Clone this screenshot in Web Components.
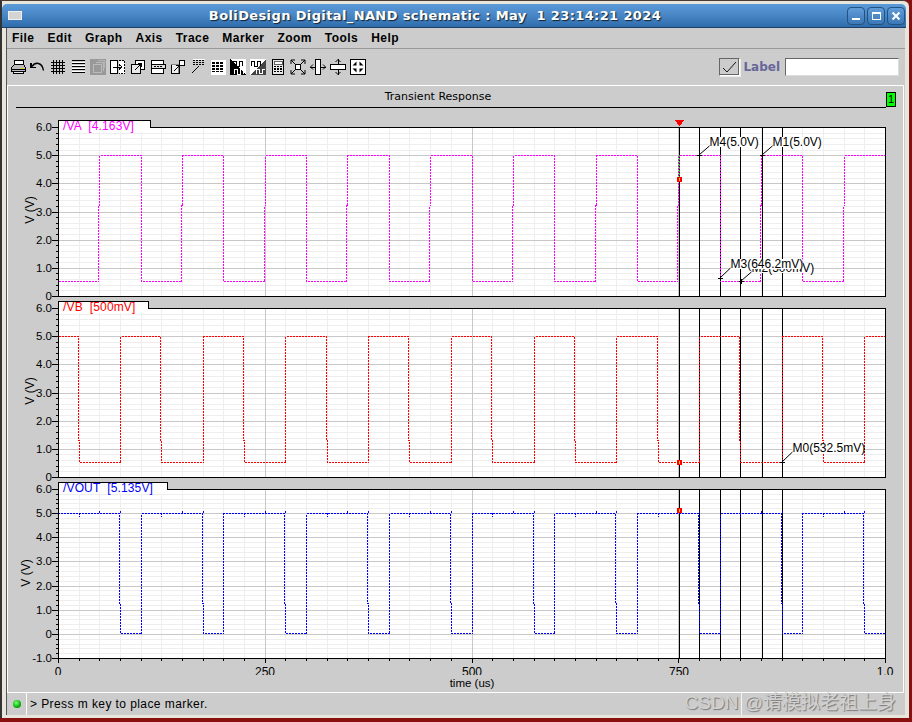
<!DOCTYPE html>
<html>
<head>
<meta charset="utf-8">
<title>BoliDesign Digital_NAND schematic</title>
<style>
  html, body { margin: 0; padding: 0; }
  body { width: 912px; height: 722px; overflow: hidden; background: #8a1010; position: relative; font-family: "Liberation Sans", sans-serif; }
</style>
</head>
<body>
<app-window>
  <title-bar slot="title">BoliDesign Digital_NAND schematic : May  1 23:14:21 2024</title-bar>
  <menu-bar items="File,Edit,Graph,Axis,Trace,Marker,Zoom,Tools,Help"></menu-bar>
  <tool-bar></tool-bar>
  <plot-panel heading="Transient Response">
    <wave-plot kind="va" name="/VA  [4.163V]" color="#ff00ff" tab="150"></wave-plot>
    <wave-plot kind="vb" name="/VB  [500mV]" color="#ff0000" tab="148"></wave-plot>
    <wave-plot kind="vout" name="/VOUT  [5.135V]" color="#0000ff" tab="167" ymin="-1" axis></wave-plot>
  </plot-panel>
  <status-bar>&gt; Press m key to place marker.</status-bar>
</app-window>
<water-mark>CSDN @请模拟老祖上身</water-mark>

<script>
// window shell: outer frame, title on top, everything else inside the inner frame
class AppWindow extends HTMLElement {
  constructor() {
    super();
    this.attachShadow({ mode: 'open' });
    this.shadowRoot.innerHTML = `
      <style>
        :host {
          display: flex;
          flex-direction: column;
          box-sizing: border-box;
          width: 909px;
          height: 718px;
          background: #e8e5dd;
          border-top: 1px solid #4a3a30;
          border-left: 2px solid #333;
          border-top-right-radius: 6px;
          padding-top: 3px;
        }
        .inner {
          flex: 1;
          min-height: 0;
          display: flex;
          flex-direction: column;
          margin: 0 4px 3px 4px;
          background: #cccccc;
          border-left: 1px solid #555;
        }
        ::slotted([slot="title"]) { margin-right: 3px; }
      </style>
      <slot name="title"></slot>
      <div class="inner"><slot></slot></div>
    `;
  }
}

class TitleBar extends HTMLElement {
  constructor() {
    super();
    this.attachShadow({ mode: 'open' });
    this.shadowRoot.innerHTML = `
      <style>
        :host {
          display: flex;
          align-items: center;
          box-sizing: border-box;
          height: 24px;
          padding: 0 1px 0 6px;
          background: linear-gradient(#5b9ad8, #4a88c8 45%, #2f6cab);
          border-bottom: 1px solid #1d3f66;
          border-radius: 5px 5px 0 0;
          color: #fff;
        }
        .menu {
          width: 12px;
          height: 7px;
          background: #d4d4d4;
          border: 1px solid #f0f0f0;
          margin-right: 6px;
        }
        .text {
          flex: 1;
          text-align: center;
          white-space: pre;
          font: bold 13px "DejaVu Sans", sans-serif;
          letter-spacing: 0.38px;
          text-shadow: 1px 1px 1px #123;
        }
        .btns { display: flex; gap: 2px; margin-left: 5px; }
        .btn {
          box-sizing: border-box;
          width: 18px;
          height: 18px;
          border: 1px solid #24527f;
          border-radius: 4px;
          background: linear-gradient(#5f9cd8, #3d78b6);
          display: flex;
          align-items: center;
          justify-content: center;
        }
        svg { display: block; }
      </style>
      <div class="menu"></div>
      <div class="text"><slot></slot></div>
      <div class="btns">
        <div class="btn"><svg width="12" height="12" shape-rendering="crispEdges"><rect x="2" y="8" width="8" height="2" fill="#fff"/></svg></div>
        <div class="btn"><svg width="12" height="12" shape-rendering="crispEdges"><path d="M2 2h8v7h-8z" fill="none" stroke="#fff"/><rect x="2" y="2" width="8" height="2" fill="#fff"/></svg></div>
        <div class="btn"><svg width="12" height="12"><path d="M2.5 2.5l7 7M9.5 2.5l-7 7" stroke="#fff" stroke-width="2"/></svg></div>
      </div>
    `;
  }
}

class MenuBar extends HTMLElement {
  constructor() {
    super();
    this.attachShadow({ mode: 'open' });
  }
  connectedCallback() {
    const items = this.getAttribute('items').split(',');
    this.shadowRoot.innerHTML = `
      <style>
        :host {
          display: flex;
          align-items: center;
          gap: 13px;
          box-sizing: border-box;
          height: 21px;
          padding: 0 0 1px 5px;
          border-bottom: 1px solid #999;
          font: bold 12px "Liberation Sans", sans-serif;
          letter-spacing: 0.45px;
          color: #000;
        }
      </style>
      ${items.map(i => `<span>${i}</span>`).join('')}
    `;
  }
}

// toolbar glyphs, all on a 16x16 box
const TOOL_ICONS = [
  // printer
  `<path d="M5 1h8l1 5H4z" fill="#fff" stroke="#000"/><path d="M1.5 8.5l3-3h9l2 3v4h-14z" fill="#bbb" stroke="#000"/><path d="M2 10h13" stroke="#000"/><rect x="11" y="9" width="3" height="1" fill="#e8d800"/><path d="M3.5 12.5h10v2h-10z" fill="#eee" stroke="#000"/>`,
  // undo
  `<path d="M2 7.5C5 3 12 2.5 13.5 11.5" fill="none" stroke="#000" stroke-width="1.4" shape-rendering="auto"/><path d="M1 3.5v5h5" fill="none" stroke="#000" stroke-width="1.4"/>`,
  // grid
  `<path d="M3.5 1v14M6.5 1v14M9.5 1v14M12.5 1v14M1 3.5h14M1 6.5h14M1 9.5h14M1 12.5h14" stroke="#000"/>`,
  // horizontal lines
  `<path d="M1.5 1.5h13M1.5 4.5h13M1.5 7.5h13M1.5 10.5h13M1.5 13.5h13" stroke="#000"/><path d="M1.5 3h13M1.5 6h13M1.5 9h13M1.5 12h13" stroke="#fff"/>`,
  // stacked pages, disabled
  `<rect x="0" y="0" width="16" height="16" fill="#999"/><path d="M3.5 5.5h8v8h-8zM5.5 3.5h8v8" fill="none" stroke="#bbb"/><path d="M7.5 1.5h7v7" fill="none" stroke="#b4b4b4"/>`,
  // split with dashed half
  `<rect x="0.5" y="1.5" width="7" height="13" fill="#fff" stroke="#000"/><path d="M8.5 1.5h6v13h-6" fill="#fff" stroke="#000" stroke-dasharray="2 1"/><path d="M3 8h8M9 5.5l3 2.5-3 2.5" fill="none" stroke="#000"/>`,
  // overlapped squares with arrow
  `<rect x="5.5" y="1.5" width="9" height="9" fill="#fff" stroke="#000"/><rect x="1.5" y="5.5" width="9" height="9" fill="#e8e8e8" stroke="#000"/><path d="M5 11l6-6M8 4.5h3.5V8" fill="none" stroke="#000"/>`,
  // window with dashed bar
  `<rect x="1.5" y="1.5" width="12" height="13" fill="#fff" stroke="#000"/><rect x="1" y="5" width="14" height="4" fill="#ddd" stroke="#000"/><path d="M4 7h9" stroke="#000" stroke-dasharray="2 1"/>`,
  // small box plus large box, arrow up right
  `<path d="M1.5 5.5h7v9h-7zM1.5 5.5" fill="#eee" stroke="#888"/><rect x="9.5" y="1.5" width="5" height="5" fill="#fff" stroke="#000"/><path d="M1.5 6v8.5h8V8" fill="none" stroke="#000"/><path d="M4 12l5-5M6 6.5h3.5V10" fill="none" stroke="#000"/>`,
  // dotted table with diagonal pointer
  `<path d="M3 1.5h12M3 3.5h12M3 5.5h12" stroke="#000" stroke-dasharray="2 1"/><rect x="3" y="0" width="12" height="1" fill="#fff"/><path d="M9 7L2 14" stroke="#000"/>`,
  // block table
  `<rect x="0.5" y="0.5" width="15" height="15" fill="#fff"/><path d="M3 3v10M7 3v10M11 3v10" stroke="#000" stroke-width="3" stroke-dasharray="2 1"/>`,
  // wave split, black
  `<path d="M0 0h16v16z" fill="#fff"/><path d="M0 0v16h16z" fill="#000"/><path d="M1 7h2V2h3v5h3V2h3v5" fill="none" stroke="#000"/><path d="M4 15v-5h3v5h3v-5h3v5" fill="none" stroke="#fff"/>`,
  // wave split, gray
  `<path d="M0 0h16L0 16z" fill="#fff"/><path d="M16 0v16H0z" fill="#444"/><path d="M1 7V2h3v5h3V2h3v5" fill="none" stroke="#000"/><path d="M6 15v-5h3v4h3v-4h3" fill="none" stroke="#fff"/>`,
  // calculator
  `<rect x="2.5" y="0.5" width="11" height="15" fill="#e8e8e8" stroke="#000"/><rect x="4" y="2" width="8" height="3" fill="#fff" stroke="#000" stroke-width="0.6"/><path d="M4 7.5h8M4 10h8M4 12.5h8" stroke="#000" stroke-width="1.4" stroke-dasharray="2 1"/>`,
  // zoom fit
  `<rect x="5.5" y="5.5" width="5" height="5" fill="#fff" stroke="#000" stroke-width="1.2"/><g shape-rendering="auto" fill="none" stroke="#000"><path d="M1 1l4.500 4.500M15 1l-4.500 4.500M1 15l4.500-4.500M15 15l-4.500-4.500"/><path d="M1 5V1h4M11 1h4v4M1 11v4h4M15 11v4h-4"/></g>`,
  // vertical bar, left and right arrows
  `<rect x="5.500" y="0.500" width="5" height="15" fill="#fff" stroke="#000"/><path d="M0 8h5M11 8h5" stroke="#000"/><path d="M3 5.500L0.500 8 3 10.500M13 5.500L15.500 8 13 10.500" fill="none" stroke="#000" shape-rendering="auto"/>`,
  // horizontal bar, up and down arrows
  `<rect x="0.500" y="5.500" width="15" height="5" fill="#fff" stroke="#000"/><path d="M8 0v5M8 11v5" stroke="#000"/><path d="M5.500 3L8 0.500 10.500 3M5.500 13L8 15.500 10.500 13" fill="none" stroke="#000" shape-rendering="auto"/>`,
  // framed inward arrows
  `<rect x="0.500" y="0.500" width="15" height="15" fill="#fff" stroke="#000"/><g fill="#000" shape-rendering="auto"><path d="M6.500 6.500v-4l-4 4zM9.500 6.500v-4l4 4zM6.500 9.500v4l-4-4zM9.500 9.500v4l4-4z"/></g>`
];

class ToolBar extends HTMLElement {
  constructor() {
    super();
    this.attachShadow({ mode: 'open' });
    this.shadowRoot.innerHTML = `
      <style>
        :host {
          display: flex;
          align-items: center;
          box-sizing: border-box;
          height: 36px;
          padding: 0 6px 1px 3px;
        }
        .tools { display: flex; gap: 4px; flex: 1; }
        svg { display: block; width: 16px; height: 16px; }
        .check {
          box-sizing: border-box;
          width: 21px;
          height: 18px;
          border: 1px solid #666;
          border-right-color: #fff;
          border-bottom-color: #fff;
          box-shadow: inset -1px -1px 0 #666, 1px 1px 0 #eee;
          background: #ccc;
          display: flex;
          align-items: center;
          justify-content: center;
        }
        .check svg { width: 15px; height: 12px; }
        .label {
          margin: 0 5px 0 3px;
          font: bold 12px "DejaVu Sans", sans-serif;
          color: #666699;
        }
        .field {
          box-sizing: border-box;
          width: 114px;
          height: 18px;
          background: #fff;
          border: 1px solid #666;
          border-right-color: #ddd;
          border-bottom-color: #ddd;
        }
      </style>
      <div class="tools">
        ${TOOL_ICONS.map(i => `<svg viewBox="0 0 16 16" shape-rendering="crispEdges">${i}</svg>`).join('')}
      </div>
      <div class="check"><svg viewBox="0 0 15 12"><path d="M1 7l4 4 9-10" fill="none" stroke="#000" stroke-width="0.9"/></svg></div>
      <div class="label">Label</div>
      <div class="field"></div>
    `;
  }
}

class PlotPanel extends HTMLElement {
  constructor() {
    super();
    this.attachShadow({ mode: 'open' });
  }
  connectedCallback() {
    this.shadowRoot.innerHTML = `
      <style>
        :host {
          display: flex;
          flex-direction: column;
          flex: 1;
          min-height: 0;
          margin-right: 1px;
          border: 1px solid #fff;
          border-top-color: #fff;
        }
        .head {
          display: flex;
          height: 22px;
          margin-bottom: 12px;
          padding-left: 8px;
          padding-right: 7px;
          font: 11px "DejaVu Sans", sans-serif;
        }
        .cap {
          flex: 1;
          box-sizing: border-box;
          border-bottom: 1px solid #000;
          height: 22px;
          padding: 4px 26px 0 0;
          text-align: center;
        }
        .badge {
          align-self: flex-end;
          box-sizing: border-box;
          width: 10px;
          height: 15px;
          margin-bottom: 1px;
          background: #00ff00;
          border: 1px solid #000;
          font: 11px/13px "Liberation Sans", sans-serif;
          text-align: center;
        }
      </style>
      <div class="head">
        <div class="cap">${this.getAttribute('heading')}</div>
        <div class="badge">1</div>
      </div>
      <slot></slot>
    `;
  }
}

// one analog trace strip: tab, grid, ticks, markers and the dotted wave
const MARKER_X = [679, 699, 720, 740, 762, 782];
const usToX = us => Math.round(58 + us * 0.827);

// square wave between two levels; edges as [us, newLevel], with a 1px jog halfway down each edge
function squarePath(startY, edges, endY) {
  let d = `M58.5 ${startY}.5`;
  for (const [us, y, jog] of edges) {
    const x = usToX(us);
    if (jog) {
      d += `H${x - 1}.5V${jog}.5H${x}.5V${y}.5`;
    } else {
      d += `H${x}.5V${y}.5`;
    }
  }
  return d + 'H885.5';
}

const TRACES = {
  va() {
    const edges = [[0, 161]];
    for (let t = 50; t < 1000; t += 100) {
      edges.push([t, 35, 85]);
      if (t + 50 < 1000) edges.push([t + 50, 161]);
    }
    return squarePath(35, edges);
  },
  vb() {
    const edges = [];
    for (let t = 25; t < 1000; t += 100) {
      edges.push([t, 161, 139]);
      edges.push([t + 50, 35]);
    }
    return squarePath(35, edges);
  },
  vout() {
    const edges = [[0, 31]];
    let d = '';
    for (let t = 75; t < 1000; t += 100) {
      edges.push([t, 151, 121]);
      if (t + 25 < 1000) edges.push([t + 25, 31]);
    }
    d = squarePath(152, edges);
    for (let t = 25; t < 1000; t += 100) {
      d += `M${usToX(t)}.5 31V34.500M${usToX(t + 25)}.5 31V27.500M${usToX(t + 50)}.5 31V28.500`;
    }
    return d;
  }
};

const PLOT_LABELS = {
  va: [
    { text: 'M4(5.0V)', x: 709.5, y: 26, w: 48, from: [699, 35] },
    { text: 'M1(5.0V)', x: 772.5, y: 26, w: 48, from: [762, 35] },
    { text: 'M2(500mV)', x: 751.5, y: 152, w: 61, from: [741, 161] },
    { text: 'M3(646.2mV)', x: 730.5, y: 148, w: 72, from: [720, 158] }
  ],
  vb: [
    { text: 'M0(532.5mV)', x: 792.5, y: 151, w: 71, from: [782, 161] }
  ],
  vout: []
};

const PLOT_DOTS = { va: 59, vb: 161, vout: 28 };

class WavePlot extends HTMLElement {
  constructor() {
    super();
    this.attachShadow({ mode: 'open' });
  }

  get kind() {
    return this.getAttribute('kind');
  }

  connectedCallback() {
    this.render();
  }

  render() {
    const color = this.getAttribute('color');
    const tab = +this.getAttribute('tab');
    const hasAxis = this.hasAttribute('axis');
    const ymin = +(this.getAttribute('ymin') || 0);
    const ymax = 6;
    const top = 7, bottom = 176;
    const height = hasAxis ? 210 : 181;
    const yOf = v => top + Math.round((ymax - v) / (ymax - ymin) * (bottom - top));

    let minorH = '', majorH = '', ticks = '', labels = '';
    for (let v = ymin; v <= ymax; v += 1) {
      const y = yOf(v);
      if (v > ymin && v < ymax) majorH += `M59 ${y}.5H885`;
      ticks += `M52 ${y}.5H58`;
      const txt = v === 0 ? '0' : v.toFixed(1);
      labels += `<text x="52" y="${y + 4}" text-anchor="end">${txt}</text>`;
      if (v < ymax) {
        for (let s = 1; s < 5; s++) {
          const ys = yOf(v + s / 5);
          minorH += `M59 ${ys}.5H885`;
          ticks += `M56 ${ys}.5H58`;
        }
      }
    }

    let minorV = '', majorV = '', bottomTicks = '', xLabels = '';
    for (let t = 25; t < 1000; t += 25) {
      const x = usToX(t);
      if (t % 250 === 0) {
        majorV += `M${x}.5 ${top}V${bottom}`;
      } else {
        minorV += `M${x}.5 ${top}V${bottom}`;
      }
      if (hasAxis) bottomTicks += `M${x}.5 ${bottom}v${t % 250 === 0 ? 5 : 3}`;
    }
    if (hasAxis) {
      bottomTicks += `M58.5 ${bottom}v5M885.5 ${bottom}v5`;
      xLabels = [[58, '0'], [265, '250'], [472, '500'], [679, '750'], [885, '1.0']]
        .map(([x, t]) => `<text x="${x}" y="194" text-anchor="middle">${t}</text>`).join('');
    }

    const markers = MARKER_X.map(x => `M${x}.5 ${top}V${bottom}`).join('');

    const notes = PLOT_LABELS[this.kind].map(l => `
      <path d="M${l.from[0]} ${l.from[1]}L${l.x + 1} ${l.y - 1}" stroke="#000" fill="none"/>
      <path d="M${l.from[0] - 2} ${l.from[1]}.5h5M${l.from[0]}.5 ${l.from[1] - 2}v5" stroke="#000" shape-rendering="crispEdges"/>
      <rect x="${l.x}" y="${l.y - 9}" width="${l.w}" height="10" fill="#fff"/>
      <text x="${l.x}" y="${l.y}">${l.text}</text>
    `).join('');

    const dotY = PLOT_DOTS[this.kind];

    this.shadowRoot.innerHTML = `
      <style>
        :host { display: block; height: ${height}px; }
        svg { display: block; }
        text { font: 12px "Liberation Sans", sans-serif; fill: #000; }
        .tick text { font-size: 11.5px; }
      </style>
      <svg width="895" height="${height}" viewBox="8 0 895 ${height}">
        <defs><clipPath id="xclip"><rect x="8" y="0" width="895" height="193"/></clipPath></defs>
        <g shape-rendering="crispEdges" fill="none">
          <rect x="58" y="${top}" width="827" height="${bottom - top}" fill="#fff"/>
          <path d="${minorH}${minorV}" stroke="#eeeeee"/>
          <path d="${majorH}${majorV}" stroke="#c8c8c8"/>
          <path d="${markers}" stroke="#000"/>
          <path d="${TRACES[this.kind]()}" stroke="${color}" stroke-dasharray="2 1"/>
          <path d="M${tab} ${top}.5H885.5V${bottom}.5H58.5V0.500H${tab}.5V${top}" stroke="#000"/>
          <rect x="59" y="1" width="${tab - 59}" height="11" fill="#fff"/>
          <path d="${ticks}${bottomTicks}" stroke="#000"/>
          ${this.kind === 'va' ? `<path d="M679.5 35V58" stroke="#00c000" stroke-dasharray="2 1"/><path d="M675 0h9l-4 6h-1z" fill="#ff0000" stroke="none"/>` : ''}
          <rect x="677" y="${dotY - 2}" width="5" height="5" fill="#ff0000"/>
          <rect x="679" y="${dotY - 1}" width="1" height="3" fill="#ffd000"/>
        </g>
        <g class="tick">${labels}</g>
        <g clip-path="url(#xclip)">${xLabels}</g>
        ${hasAxis ? `<text x="472" y="205" text-anchor="middle" style="font-size:11.500px">time (us)</text>` : ''}
        <text transform="translate(${hasAxis ? 30 : 34} ${hasAxis ? 91 : 90}) rotate(-90)" text-anchor="middle">V (V)</text>
        <text x="63" y="10" style="fill:${color};letter-spacing:.15px;white-space:pre" xml:space="preserve">${this.getAttribute('name')}</text>
        ${notes}
      </svg>
    `;
  }
}

class StatusBar extends HTMLElement {
  constructor() {
    super();
    this.attachShadow({ mode: 'open' });
    this.shadowRoot.innerHTML = `
      <style>
        :host {
          display: flex;
          box-sizing: border-box;
          height: 22px;
          font: 12px "Liberation Sans", sans-serif;
          letter-spacing: 0.42px;
          color: #000;
        }
        .led {
          width: 19px;
          border-right: 1px solid #fff;
          display: flex;
          align-items: center;
          justify-content: center;
        }
        .dot {
          width: 8px;
          height: 8px;
          border-radius: 50%;
          background: radial-gradient(circle at 40% 35%, #7dff7d, #0cb80c 55%, #055f05);
        }
        .msg {
          flex: 1;
          display: flex;
          align-items: center;
          padding-left: 3px;
        }
      </style>
      <div class="led"><div class="dot"></div></div>
      <div class="msg"><slot></slot></div>
    `;
  }
}

// the blog watermark lies over the status bar
class WaterMark extends HTMLElement {
  constructor() {
    super();
    this.attachShadow({ mode: 'open' });
    this.shadowRoot.innerHTML = `
      <style>
        :host {
          position: absolute;
          right: 16px;
          top: 691px;
          font: 19px/24px "Liberation Sans", "Noto Sans CJK SC", sans-serif;
          color: #d2d2d2;
          text-shadow: 1px 1px 1px #777;
          white-space: nowrap;
        }
        .rule {
          position: absolute;
          left: 56px;
          top: 1px;
          width: 1px;
          height: 23px;
          background: #fff;
          opacity: .8;
        }
      </style>
      <div class="rule"></div>
      <slot></slot>
    `;
  }
}

customElements.define('app-window', AppWindow);
customElements.define('title-bar', TitleBar);
customElements.define('menu-bar', MenuBar);
customElements.define('tool-bar', ToolBar);
customElements.define('plot-panel', PlotPanel);
customElements.define('wave-plot', WavePlot);
customElements.define('status-bar', StatusBar);
customElements.define('water-mark', WaterMark);
</script>
</body>
</html>
